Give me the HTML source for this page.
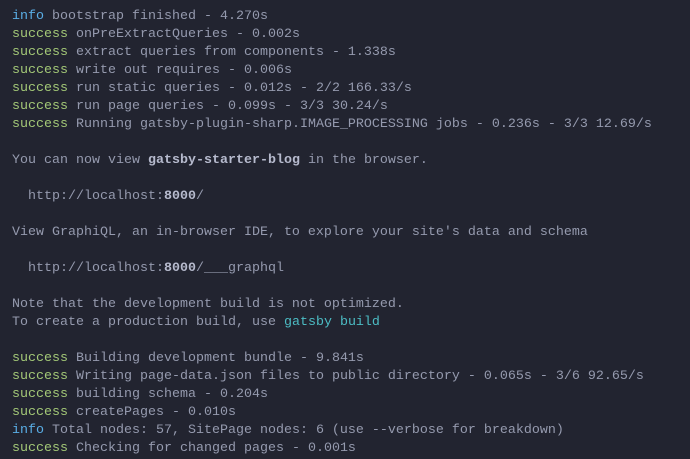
<!DOCTYPE html>
<html><head><style>
html,body{margin:0;padding:0;background:#222430;width:690px;height:459px;overflow:hidden}
pre{margin:0;padding:8px 0 0 12px;font-family:"Liberation Mono",monospace;font-size:13.33px;line-height:18px;color:#959aae;white-space:pre}
.i{color:#5aaee6}.s{color:#a3c877}.b{font-weight:bold;color:#b6bacd}.c{color:#4cbcc4}
</style></head><body><pre><span class="i">info</span> bootstrap finished - 4.270s
<span class="s">success</span> onPreExtractQueries - 0.002s
<span class="s">success</span> extract queries from components - 1.338s
<span class="s">success</span> write out requires - 0.006s
<span class="s">success</span> run static queries - 0.012s - 2/2 166.33/s
<span class="s">success</span> run page queries - 0.099s - 3/3 30.24/s
<span class="s">success</span> Running gatsby-plugin-sharp.IMAGE_PROCESSING jobs - 0.236s - 3/3 12.69/s

You can now view <span class="b">gatsby-starter-blog</span> in the browser.

  http://localhost:<span class="b">8000</span>/

View GraphiQL, an in-browser IDE, to explore your site's data and schema

  http://localhost:<span class="b">8000</span>/___graphql

Note that the development build is not optimized.
To create a production build, use <span class="c">gatsby build</span>

<span class="s">success</span> Building development bundle - 9.841s
<span class="s">success</span> Writing page-data.json files to public directory - 0.065s - 3/6 92.65/s
<span class="s">success</span> building schema - 0.204s
<span class="s">success</span> createPages - 0.010s
<span class="i">info</span> Total nodes: 57, SitePage nodes: 6 (use --verbose for breakdown)
<span class="s">success</span> Checking for changed pages - 0.001s</pre></body></html>
